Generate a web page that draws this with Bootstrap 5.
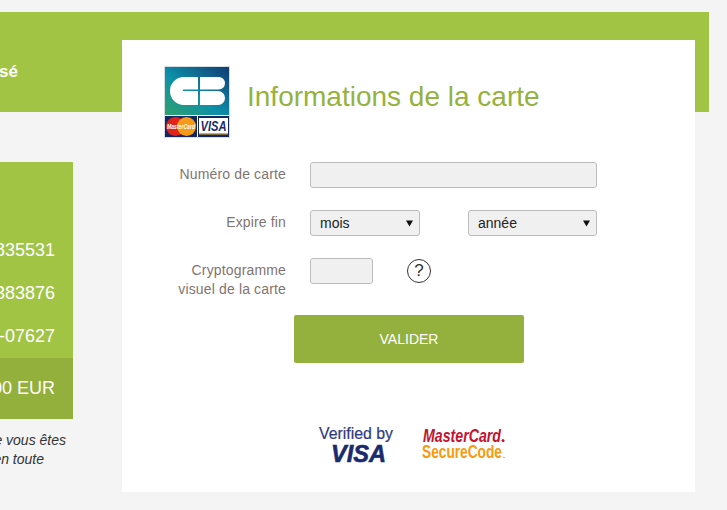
<!DOCTYPE html>
<html lang="fr">
  <head>
    <meta charset="UTF-8" />
    <meta name="viewport" content="width=device-width, initial-scale=1.0" />
    <title>Informations de la carte</title>
    <link href="https://cdn.jsdelivr.net/npm/bootstrap@5.3.0/dist/css/bootstrap.min.css" rel="stylesheet" />
    <style>
      body {
        background-color: #f4f4f4;
        font-family: "Liberation Sans", Arial, sans-serif;
        font-size: 14px;
        padding-top: 12px;
        padding-bottom: 18px;
      }
      .top-band {
        height: 100px;
        margin-right: 18px;
        padding-top: 20px;
        background-color: #a2c445;
        color: #fff;
        font-size: 17px;
        font-weight: 700;
      }
      .band-title {
        width: 18px;
      }
      .clip-left {
        display: flex;
        justify-content: flex-end;
        overflow: hidden;
        white-space: nowrap;
      }
      .side-col {
        width: 73px;
        margin-top: 50px;
        flex-shrink: 0;
      }
      .order-box {
        height: 196px;
        padding-top: 67px;
        padding-right: 18px;
        background-color: #a2c445;
        color: #fff;
        font-size: 18px;
      }
      .order-line {
        height: 43px;
        line-height: 43px;
      }
      .order-total {
        height: 61px;
        line-height: 60px;
        padding-right: 18px;
        background-color: #94b03c;
        color: #fff;
        font-size: 18px;
      }
      .side-note {
        margin-top: 12px;
        font-style: italic;
        line-height: 19px;
        color: #333;
      }
      .side-note .line-a { padding-right: 7px; }
      .side-note .line-b { padding-right: 29px; }
      .pay-card {
        width: 573px;
        height: 452px;
        margin-top: -72px;
        margin-left: 49px;
        padding: 26px 42px 0;
        background-color: #fff;
      }
      .pay-title {
        margin: 0 0 10px 17px;
        font-size: 28px;
        font-weight: 400;
        color: #95b23d;
      }
      .pay-form {
        margin-top: 24px;
      }
      .pay-row {
        display: flex;
        gap: 24px;
        margin-bottom: 22px;
      }
      .pay-label {
        width: 122px;
        margin: 0;
        padding-top: 3px;
        text-align: right;
        line-height: 19px;
        letter-spacing: 0.15px;
        color: #7f7570;
      }
      .pay-input.form-control,
      .pay-input.form-select {
        height: 26px;
        min-height: 0;
        padding: 0 9px;
        font-size: 14px;
        color: #222;
        background-color: #f0f0f0;
        border: 1px solid #bcbcbc;
        border-radius: 3px;
      }
      .pay-input.form-select {
        padding-right: 18px;
        background-image: url("data:image/svg+xml,%3Csvg xmlns='http://www.w3.org/2000/svg' viewBox='0 0 8 7'%3E%3Cpath d='M0 0h8L4 7z' fill='%23111'/%3E%3C/svg%3E");
        background-size: 7px 7px;
        background-position: right 6px center;
      }
      .w-number { width: 287px; }
      .w-month { width: 110px; }
      .w-year { width: 129px; margin-left: 48px; }
      .w-cvv { width: 63px; }
      .help-dot {
        width: 24px;
        height: 24px;
        margin-left: 34px;
        margin-top: 1px;
        border: 1px solid #333;
        border-radius: 50%;
        font-size: 17px;
        line-height: 22px;
        text-align: center;
        color: #333;
      }
      .pay-btn.btn {
        display: block;
        width: 230px;
        height: 48px;
        margin: -6px 0 0 130px;
        background-color: #95b13d;
        border: 0;
        border-radius: 2px;
        color: #fff;
        font-size: 14px;
      }
      .trust-logos {
        margin-top: 63px;
        margin-left: 155px;
        gap: 27px;
      }
    </style>
  </head>
  <body>
    <div class="top-band d-flex align-items-center">
      <div class="band-title clip-left">Paiement sécurisé</div>
    </div>
    <div class="d-flex align-items-start">
      <div class="side-col">
        <div class="order-box">
          <div class="order-line clip-left">N° 835531</div>
          <div class="order-line clip-left">N° 383876</div>
          <div class="order-line clip-left">N° 07-07627</div>
        </div>
        <div class="order-total clip-left">100,00 EUR</div>
        <div class="side-note">
          <div class="line-a clip-left">Sur cette page vous êtes</div>
          <div class="line-b clip-left">en toute</div>
        </div>
      </div>

      <div class="pay-card">
        <div class="d-flex align-items-center">
          <svg width="66" height="72" viewBox="0 0 66 72">
            <defs>
              <linearGradient id="cbGrad" x1="0" y1="1" x2="1" y2="0">
                <stop offset="0" stop-color="#2fa36b" />
                <stop offset="0.45" stop-color="#0d8fa8" />
                <stop offset="1" stop-color="#123b73" />
              </linearGradient>
            </defs>
            <rect x="0.5" y="0.5" width="65" height="71" fill="#fff" stroke="#d4dde2" />
            <rect x="1" y="1" width="64" height="48" fill="url(#cbGrad)" />
            <path d="M34 11H20a14 14 0 0 0 0 28H34V25H19V23.500H34Z" fill="#fff" />
            <path d="M36 11H54.750a6.250 6.250 0 0 1 0 12.500H36ZM36 25H54a7 7 0 0 1 0 14H36Z" fill="#fff" />
            <rect x="1" y="50" width="32" height="21" fill="#14285f" />
            <circle cx="11.500" cy="60.500" r="9.500" fill="#e2231a" />
            <circle cx="22.500" cy="60.500" r="9.500" fill="#f59a1b" />
            <text x="17" y="63" font-family="Liberation Sans" font-size="7" font-style="italic" font-weight="700" fill="#fff" text-anchor="middle" textLength="28" lengthAdjust="spacingAndGlyphs">MasterCard</text>
            <rect x="34" y="50" width="31" height="21" fill="#14285f" />
            <rect x="35" y="52" width="29" height="16" fill="#fff" />
            <rect x="35" y="67" width="29" height="1.500" fill="#e9a91f" />
            <text x="49.500" y="65" font-family="Liberation Sans" font-size="14" font-style="italic" font-weight="700" fill="#1a2a6c" text-anchor="middle" textLength="26" lengthAdjust="spacingAndGlyphs">VISA</text>
          </svg>
          <h1 class="pay-title">Informations de la carte</h1>
        </div>

        <form class="pay-form" onsubmit="event.preventDefault()">
          <div class="pay-row">
            <label class="pay-label" for="card-number">Numéro de carte</label>
            <input class="form-control pay-input w-number" id="card-number" type="text" />
          </div>
          <div class="pay-row">
            <label class="pay-label" for="card-month">Expire fin</label>
            <div class="d-flex">
              <select class="form-select pay-input w-month" id="card-month"><option>mois</option></select>
              <select class="form-select pay-input w-year" aria-label="année"><option>année</option></select>
            </div>
          </div>
          <div class="pay-row">
            <label class="pay-label" for="card-cvv">Cryptogramme visuel de la carte</label>
            <div class="d-flex align-items-start">
              <input class="form-control pay-input w-cvv" id="card-cvv" type="text" />
              <div class="help-dot">?</div>
            </div>
          </div>
          <button class="btn pay-btn" type="submit">VALIDER</button>
        </form>

        <div class="trust-logos d-flex align-items-start">
          <svg width="76" height="42" viewBox="0 0 76 42">
            <text x="0" y="13" font-family="Liberation Sans" font-size="16" fill="#2e3a80" stroke="#2e3a80" stroke-width="0.2" textLength="74" lengthAdjust="spacingAndGlyphs">Verified by</text>
            <text x="12" y="36" font-family="Liberation Sans" font-size="24" font-style="italic" font-weight="700" fill="#1a2a6c" stroke="#1a2a6c" stroke-width="0.6" textLength="55" lengthAdjust="spacingAndGlyphs">VISA</text>
          </svg>
          <svg width="86" height="42" viewBox="0 0 86 42">
            <text x="1" y="16" font-family="Liberation Sans" font-size="18" font-style="italic" font-weight="700" fill="#c4122f" textLength="78" lengthAdjust="spacingAndGlyphs">MasterCard</text>
            <circle cx="81" cy="14.500" r="1.500" fill="#c4122f" />
            <text x="0" y="32" font-family="Liberation Sans" font-size="18" font-weight="700" fill="#f79a0e" textLength="80" lengthAdjust="spacingAndGlyphs">SecureCode</text>
            <circle cx="82" cy="31.500" r="0.800" fill="#f79a0e" />
          </svg>
        </div>
      </div>
    </div>
    <script src="https://cdn.jsdelivr.net/npm/bootstrap@5.3.0/dist/js/bootstrap.bundle.min.js"></script>
  </body>
</html>
